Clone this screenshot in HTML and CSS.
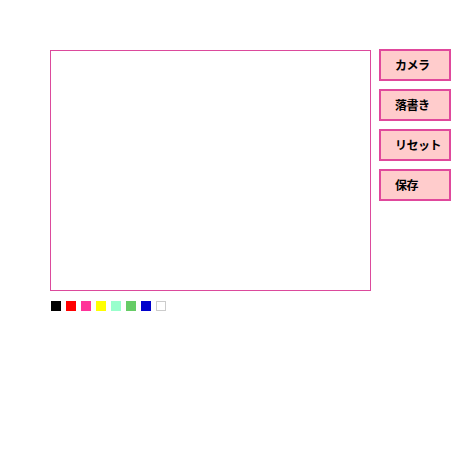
FILE: index.html
```html
<!DOCTYPE html>
<html lang="ja">
<head>
<meta charset="utf-8">
<link rel="stylesheet" href="styles.css">
</head>
<body>
<div class="app">
  <div class="left">
    <div class="canvas"></div>
    <div class="palette">
      <span class="sw black"></span>
      <span class="sw red"></span>
      <span class="sw pink"></span>
      <span class="sw yellow"></span>
      <span class="sw mint"></span>
      <span class="sw green"></span>
      <span class="sw blue"></span>
      <span class="sw white"></span>
    </div>
  </div>
  <div class="buttons">
    <button class="btn">カメラ</button>
    <button class="btn">落書き</button>
    <button class="btn">リセット</button>
    <button class="btn">保存</button>
  </div>
</div>
</body>
</html>
```
FILE: styles.css
```css
html, body {
  margin: 0;
  padding: 0;
  background: #fff;
}
body {
  font-family: "Noto Sans CJK JP", "Noto Sans", sans-serif;
}
.app {
  display: flex;
  align-items: flex-start;
  padding: 49px 0 0 50px;
  gap: 8px;
}
.left {
  display: flex;
  flex-direction: column;
  padding-top: 1px;
}
.canvas {
  width: 319px;
  height: 239px;
  border: 1px solid #dc4a9c;
  background: #fff;
}
.palette {
  display: flex;
  gap: 5px;
  padding: 10px 0 0 1px;
}
.sw {
  display: block;
  width: 10px;
  height: 10px;
  box-sizing: border-box;
}
.black { background: #000; }
.red { background: #ff0000; }
.pink { background: #ff3399; }
.yellow { background: #ffff00; }
.mint { background: #99ffcc; }
.green { background: #66cc66; }
.blue { background: #0000cc; }
.white { background: #fff; border: 1px solid #ccc; }
.buttons {
  display: flex;
  flex-direction: column;
  gap: 8px;
}
.btn {
  width: 72px;
  height: 32px;
  box-sizing: border-box;
  border: 2px solid #e0489c;
  background: #ffcccc;
  padding: 0 0 0 14px;
  margin: 0;
  text-align: left;
  font-family: "Noto Sans CJK JP", sans-serif;
  font-weight: bold;
  font-size: 12px;
  letter-spacing: -0.5px;
  color: #000;
  line-height: 1;
}
```
